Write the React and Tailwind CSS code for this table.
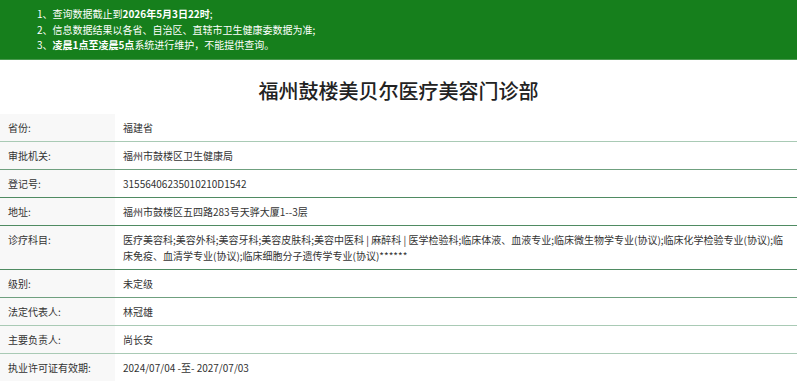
import React from "react";

const rows = [
  { label: "省份:", value: "福建省", border: "#a9cab5" },
  { label: "审批机关:", value: "福州市鼓楼区卫生健康局", border: "#6fa07f" },
  { label: "登记号:", value: "31556406235010210D1542", border: "#4f8b62" },
  { label: "地址:", value: "福州市鼓楼区五四路283号天骅大厦1--3层", border: "#4f8b62" },
  {
    label: "诊疗科目:",
    value:
      "医疗美容科;美容外科;美容牙科;美容皮肤科;美容中医科 | 麻醉科 | 医学检验科;临床体液、血液专业;临床微生物学专业(协议);临床化学检验专业(协议);临床免疫、血清学专业(协议);临床细胞分子遗传学专业(协议)******",
    border: "#4f8b62",
  },
  { label: "级别:", value: "未定级", border: "#6fa07f" },
  { label: "法定代表人:", value: "林冠雄", border: "#a9cab5" },
  { label: "主要负责人:", value: "尚长安", border: "#a9cab5" },
  { label: "执业许可证有效期:", value: "2024/07/04 -至- 2027/07/03", border: "transparent" },
];

export default function App() {
  return (
    <div
      className="w-[800px] h-[383px] overflow-hidden bg-white text-[#333]"
      style={{ fontFamily: '"Noto Sans CJK SC", "Open Sans", sans-serif' }}
    >
      <div className="w-[797px]">
        <div className="h-[60px] bg-[#167f1c] border-b border-[#4a9a4f] pl-[37px] pt-[6px] text-white text-[10px] leading-[15.6px]">
          <div>
            1、查询数据截止到<span className="font-bold">2026年5月3日22时</span>;
          </div>
          <div>2、信息数据结果以各省、自治区、直辖市卫生健康委数据为准;</div>
          <div>
            3、<span className="font-bold">凌晨1点至凌晨5点</span>系统进行维护，不能提供查询。
          </div>
        </div>
        <h1 className="mt-[17px] mb-[9px] h-[28px] text-center text-[20px] leading-[28px] text-[#222] font-medium">
          福州鼓楼美贝尔医疗美容门诊部
        </h1>
        <div className="text-[10px] leading-[16px]">
          {rows.map((r, i) => (
            <div
              key={i}
              className="flex border-b"
              style={{ borderColor: r.border }}
            >
              <div className="w-[115px] shrink-0 bg-[#f8f8f8] pl-[8px] py-[5.5px] text-[#333]">
                {r.label}
              </div>
              <div className="flex-1 pl-[8px] pr-[8px] py-[5.5px] text-[#333] break-all">
                {r.value}
              </div>
            </div>
          ))}
        </div>
      </div>
    </div>
  );
}
